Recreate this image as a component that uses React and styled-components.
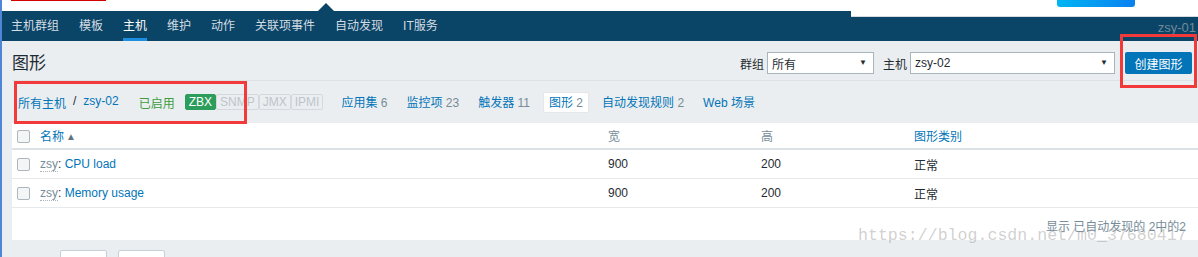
import React from "react";
import styled, { createGlobalStyle } from "styled-components";

const GlobalStyle = createGlobalStyle`
  html, body {
    margin: 0;
    padding: 0;
    background: #ebeef0;
    font-family: "Liberation Sans", Arial, "Noto Sans CJK SC", sans-serif;
    font-size: 12px;
    color: #1f2c33;
    overflow: hidden;
  }
`;

const navItems = ["主机群组", "模板", "主机", "维护", "动作", "关联项事件", "自动发现", "IT服务"];

const tabs = [
  { label: "应用集", count: "6" },
  { label: "监控项", count: "23" },
  { label: "触发器", count: "11" },
  { label: "图形", count: "2", active: true },
  { label: "自动发现规则", count: "2" },
  { label: "Web 场景" },
];

const rows = [
  { name: "CPU load", width: 900, height: 200, type: "正常" },
  { name: "Memory usage", width: 900, height: 200, type: "正常" },
];

function App() {
  return (
    <Page>
      <GlobalStyle />
      <TopStrip>
        <RedMark />
      </TopStrip>
      <Notch />
      <SearchPanel>
        <GradientPill />
      </SearchPanel>
      <NavBar>
        {navItems.map((item) => (
          <NavItem key={item} active={item === "主机"}>
            {item}
          </NavItem>
        ))}
        <ServerName>zsy-01</ServerName>
      </NavBar>

      <Content>
        <HeaderRow>
          <Title>图形</Title>
          <Filters>
            <FilterLabel>群组</FilterLabel>
            <Select width={107}>
              所有
              <Arrow>▼</Arrow>
            </Select>
            <FilterLabel>主机</FilterLabel>
            <Select width={205}>
              zsy-02
              <Arrow>▼</Arrow>
            </Select>
            <PrimaryButton>创建图形</PrimaryButton>
          </Filters>
        </HeaderRow>

        <TabsRow>
          <Crumbs>
            <Link>所有主机</Link>
            <Slash>/</Slash>
            <Link>zsy-02</Link>
          </Crumbs>
          <Enabled>已启用</Enabled>
          <Badges>
            <Badge on>ZBX</Badge>
            <Badge>SNMP</Badge>
            <Badge>JMX</Badge>
            <Badge>IPMI</Badge>
          </Badges>
          <Tabs>
            {tabs.map((t) => (
              <Tab key={t.label} active={t.active}>
                {t.label}
                {t.count && <Count> {t.count}</Count>}
              </Tab>
            ))}
          </Tabs>
        </TabsRow>

        <Panel>
          <Table>
            <colgroup>
              <col style={{ width: 28 }} />
              <col style={{ width: 568 }} />
              <col style={{ width: 153 }} />
              <col style={{ width: 153 }} />
              <col />
            </colgroup>
            <thead>
              <tr>
                <Th>
                  <Checkbox />
                </Th>
                <Th link>
                  名称<SortArrow>▲</SortArrow>
                </Th>
                <Th>宽</Th>
                <Th>高</Th>
                <Th link>图形类别</Th>
              </tr>
            </thead>
            <tbody>
              {rows.map((r) => (
                <tr key={r.name}>
                  <Td>
                    <Checkbox />
                  </Td>
                  <Td>
                    <Template>zsy</Template>: <Link>{r.name}</Link>
                  </Td>
                  <Td>{r.width}</Td>
                  <Td>{r.height}</Td>
                  <Td>{r.type}</Td>
                </tr>
              ))}
            </tbody>
          </Table>
          <TableFooter>显示 已自动发现的 2中的2</TableFooter>
        </Panel>

        <ActionRow>
          <GhostButton />
          <GhostButton />
        </ActionRow>
      </Content>

      <Annotation style={{ left: 12, top: 81, width: 233, height: 43 }} />
      <Annotation style={{ left: 1118, top: 34, width: 77, height: 54 }} />
      <Watermark>https://blog.csdn.net/m0_37680417</Watermark>
    </Page>
  );
}

const Page = styled.div`
  position: relative;
  width: 1198px;
  height: 257px;
  border-left: 2px solid #4f86d6;
  box-sizing: border-box;
  overflow: hidden;
`;

const TopStrip = styled.div`
  height: 11px;
  background: #ffffff;
`;

const RedMark = styled.div`
  margin-left: 9px;
  width: 95px;
  height: 1px;
  background: #d40000;
`;

const Notch = styled.div`
  position: absolute;
  left: 316px;
  top: 3px;
  width: 0;
  height: 0;
  border-left: 8px solid transparent;
  border-right: 8px solid transparent;
  border-bottom: 8px solid #0a4466;
`;

const SearchPanel = styled.div`
  position: absolute;
  left: 849px;
  top: 0;
  width: 347px;
  height: 16px;
  background: #ffffff;
  border-bottom: 1px solid #d5dbe0;
  z-index: 2;
`;

const GradientPill = styled.div`
  margin-left: 206px;
  width: 78px;
  height: 7px;
  border-radius: 0 0 3px 3px;
  background: linear-gradient(90deg, #00b5f2, #0a80f0);
`;

const NavBar = styled.nav`
  display: flex;
  align-items: center;
  gap: 20px;
  height: 30px;
  padding-left: 9px;
  padding-right: 2px;
  background: #0a4466;
`;

const NavItem = styled.div`
  position: relative;
  height: 30px;
  line-height: 30px;
  font-size: 12px;
  color: ${(p) => (p.active ? "#ffffff" : "#d4dde3")};

  &::after {
    content: "";
    display: ${(p) => (p.active ? "block" : "none")};
    position: absolute;
    left: 0;
    right: 0;
    bottom: 0;
    height: 3px;
    background: #1d8ee0;
  }
`;

const ServerName = styled.div`
  margin-left: auto;
  padding-top: 2px;
  font-size: 13px;
  color: #6e8a9b;
`;

const Content = styled.div`
  padding-left: 10px;
`;

const HeaderRow = styled.div`
  display: flex;
  align-items: flex-start;
  justify-content: space-between;
  height: 40px;
  padding-top: 11px;
  box-sizing: border-box;
  border-bottom: 1px solid #dde2e5;
`;

const Title = styled.h1`
  margin: 1px 0 0;
  font-size: 17px;
  font-weight: normal;
  line-height: 22px;
  color: #1f2c33;
`;

const Filters = styled.div`
  display: flex;
  align-items: center;
  padding-right: 6px;
`;

const FilterLabel = styled.span`
  margin: 0 3px 0 9px;
  font-size: 12px;
  color: #1f2c33;
`;

const Select = styled.div`
  position: relative;
  display: flex;
  align-items: center;
  width: ${(p) => p.width}px;
  height: 22px;
  padding-left: 4px;
  box-sizing: border-box;
  background: #ffffff;
  border: 1px solid #a9b5bd;
  font-size: 12px;
  color: #1f2c33;
`;

const Arrow = styled.span`
  position: absolute;
  right: 6px;
  top: 5px;
  font-size: 8px;
  color: #1f2c33;
`;

const PrimaryButton = styled.button`
  margin-left: 10px;
  height: 22px;
  width: 67px;
  padding: 0;
  border: none;
  border-radius: 2px;
  background: #0275b8;
  color: #ffffff;
  font-family: inherit;
  font-size: 12px;
`;

const TabsRow = styled.div`
  display: flex;
  align-items: center;
  height: 42px;
  padding-left: 6px;
  font-size: 12px;
`;

const Crumbs = styled.div`
  display: flex;
  gap: 7px;
  margin-right: 20px;
`;

const Link = styled.span`
  color: #0275b8;
`;

const Slash = styled.span`
  color: #1f2c33;
`;

const Enabled = styled.span`
  color: #3d9d3f;
  margin-right: 10px;
`;

const Badges = styled.div`
  display: flex;
  margin-right: 12px;
`;

const Badge = styled.span`
  height: 16px;
  line-height: 14px;
  padding: 0 3px;
  border-radius: 2px;
  box-sizing: border-box;
  font-size: 12px;
  background: ${(p) => (p.on ? "#2c9d5a" : "transparent")};
  color: ${(p) => (p.on ? "#ffffff" : "#bcc5cb")};
  border: 1px solid ${(p) => (p.on ? "#2c9d5a" : "#d3d9dd")};
`;

const Tabs = styled.div`
  display: flex;
  align-items: center;
  gap: 7px;
`;

const Tab = styled.div`
  padding: 0 5px;
  height: 21px;
  line-height: 21px;
  box-sizing: border-box;
  color: #0275b8;
  background: ${(p) => (p.active ? "#ffffff" : "transparent")};
  border: 1px solid ${(p) => (p.active ? "#e3e7ea" : "transparent")};
  border-radius: 2px;
  white-space: pre;
`;

const Count = styled.span`
  color: #768d99;
`;

const Panel = styled.div`
  background: #ffffff;
  height: 117px;
`;

const Table = styled.table`
  width: 100%;
  border-collapse: collapse;
  table-layout: fixed;
`;

const Th = styled.th`
  height: 25px;
  padding: 0;
  text-align: left;
  font-weight: normal;
  font-size: 12px;
  color: ${(p) => (p.link ? "#0275b8" : "#768d99")};
  border-bottom: 2px solid #dce1e5;
`;

const Td = styled.td`
  height: 28px;
  padding: 0;
  font-size: 12px;
  color: #1f2c33;
  border-bottom: 1px solid #e6e9eb;
`;

const Checkbox = styled.span`
  display: inline-block;
  margin-left: 5px;
  width: 11px;
  height: 11px;
  border: 1px solid #acb6bd;
  border-radius: 2px;
  background: #f4f5f6;
  vertical-align: middle;
`;

const SortArrow = styled.span`
  margin-left: 2px;
  font-size: 10px;
  color: #5f7482;
  vertical-align: 1px;
`;

const Template = styled.span`
  color: #768d99;
  border-bottom: 1px dotted #aab5bc;
`;

const TableFooter = styled.div`
  padding: 9px 12px 0 0;
  text-align: right;
  font-size: 12px;
  color: #768d99;
`;

const ActionRow = styled.div`
  display: flex;
  gap: 11px;
  padding: 10px 0 0 48px;
`;

const GhostButton = styled.div`
  width: 45px;
  height: 22px;
  background: #ffffff;
  border: 1px solid #c7d0d6;
  border-radius: 2px;
`;

const Annotation = styled.div`
  position: absolute;
  box-sizing: border-box;
  border: 3px solid #f23a3a;
  z-index: 3;
`;

const Watermark = styled.div`
  position: absolute;
  left: 856px;
  top: 226px;
  font-family: "Liberation Mono", "Courier New", monospace;
  font-size: 16.6px;
  color: rgba(150, 150, 150, 0.45);
  z-index: 4;
  white-space: nowrap;
`;

export default App;
